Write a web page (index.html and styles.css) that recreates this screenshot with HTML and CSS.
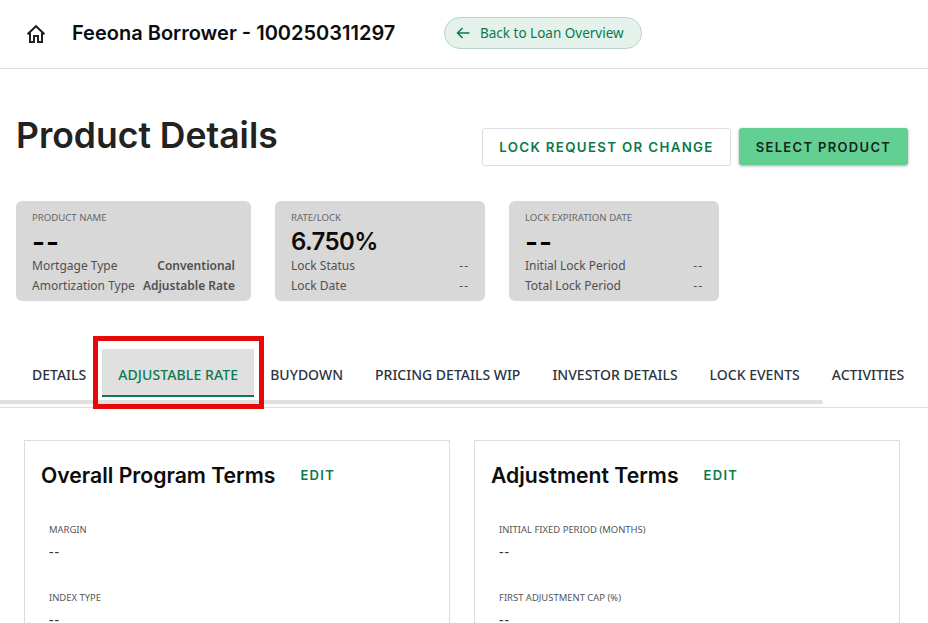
FILE: index.html
```html
<!DOCTYPE html>
<html lang="en">
<head>
<meta charset="utf-8">
<title>Product Details</title>
<link rel="stylesheet" href="styles.css">
</head>
<body>
<header class="topbar">
  <svg class="home" viewBox="0 0 24 24" width="24" height="24" aria-hidden="true"><path d="M3.500 12.200 12 4.200l8.500 8M6 10.200V20h4v-6h4v6h4v-9.800" fill="none" stroke="#222" stroke-width="2"/></svg>
  <span class="borrower">Feeona Borrower - 100250311297</span>
  <a class="back">
    <svg viewBox="0 0 16 16" width="16" height="16" aria-hidden="true"><path d="M14.500 8H2.500M7.500 3 2.500 8l5 5" fill="none" stroke="#0b7a4f" stroke-width="1.500"/></svg>
    <span>Back to Loan Overview</span>
  </a>
</header>
<main>
  <section class="headline">
    <h1>Product Details</h1>
    <div class="actions">
      <button class="btn outline">LOCK REQUEST OR CHANGE</button>
      <button class="btn solid">SELECT PRODUCT</button>
    </div>
  </section>
  <section class="summary">
    <div class="stat w235">
      <div class="cap">PRODUCT NAME</div>
      <div class="big dash">--</div>
      <div class="row"><span>Mortgage Type</span><b>Conventional</b></div>
      <div class="row"><span>Amortization Type</span><b>Adjustable Rate</b></div>
    </div>
    <div class="stat w210">
      <div class="cap">RATE/LOCK</div>
      <div class="big">6.750%</div>
      <div class="row"><span>Lock Status</span><span class="nil">--</span></div>
      <div class="row"><span>Lock Date</span><span class="nil">--</span></div>
    </div>
    <div class="stat w210">
      <div class="cap">LOCK EXPIRATION DATE</div>
      <div class="big dash">--</div>
      <div class="row"><span>Initial Lock Period</span><span class="nil">--</span></div>
      <div class="row"><span>Total Lock Period</span><span class="nil">--</span></div>
    </div>
  </section>
  <nav class="tabs">
    <div class="tablist">
      <a class="tab">DETAILS</a>
      <a class="tab active">ADJUSTABLE RATE</a>
      <a class="tab">BUYDOWN</a>
      <a class="tab">PRICING DETAILS WIP</a>
      <a class="tab">INVESTOR DETAILS</a>
      <a class="tab">LOCK EVENTS</a>
      <a class="tab">ACTIVITIES</a>
    </div>
    <div class="scrollbar"></div>
    <div class="highlight"></div>
  </nav>
  <section class="panels">
    <article class="panel">
      <div class="panel-head"><h2>Overall Program Terms</h2><a class="edit">EDIT</a></div>
      <div class="field"><div class="label">MARGIN</div><div class="value">--</div></div>
      <div class="field"><div class="label">INDEX TYPE</div><div class="value">--</div></div>
    </article>
    <article class="panel">
      <div class="panel-head"><h2>Adjustment Terms</h2><a class="edit">EDIT</a></div>
      <div class="field"><div class="label">INITIAL FIXED PERIOD (MONTHS)</div><div class="value">--</div></div>
      <div class="field"><div class="label">FIRST ADJUSTMENT CAP (%)</div><div class="value">--</div></div>
    </article>
  </section>
</main>
</body>
</html>
```
FILE: styles.css
```css
* { box-sizing: border-box; }
html, body { margin: 0; height: 623px; overflow: hidden; background: #fff; }
body { font-family: "Noto Sans", "Open Sans", sans-serif; color: #222; }

.topbar { height: 69px; border-bottom: 1px solid #ddd; display: flex; align-items: center; padding-left: 24px; }
.home { flex: none; margin-right: 24px; margin-bottom: 1px; }
.borrower { font-family: Inter, sans-serif; font-weight: 600; font-size: 20px; color: #0c0c0c; width: 372px; white-space: nowrap; margin-bottom: 2px; }
.back { display: flex; align-items: center; gap: 9px; width: 198px; height: 32px; padding-left: 10px; border: 1px solid #b4d6c6; border-radius: 16px; background: #e4f2eb; color: #0b7a4f; font-size: 13.500px; white-space: nowrap; margin-bottom: 3px; }

.headline { display: flex; justify-content: space-between; padding: 0 20px 0 16px; height: 132px; }
h1 { margin: 43px 0 0; font-family: Inter, sans-serif; font-weight: 600; font-size: 35.500px; line-height: 48px; color: #222; white-space: nowrap; }
.actions { display: flex; gap: 8px; align-items: flex-start; margin-top: 59px; }
.btn { font-family: Inter, sans-serif; font-weight: 600; font-size: 13.300px; letter-spacing: 1.330px; border-radius: 3px; white-space: nowrap; padding: 0; }
.outline { width: 249px; height: 38px; background: #fff; border: 1px solid #ddd; color: #0b7a4f; }
.solid { width: 169px; height: 37px; background: #62d092; border: 0; color: #16261d; font-size: 13px; box-shadow: 0 1px 3px rgba(0,0,0,.35); }

.summary { display: flex; gap: 24px; padding-left: 16px; }
.stat { height: 100px; background: #d8d8d8; border-radius: 6px; padding: 10px 16px 0; }
.w235 { width: 235px; }
.w210 { width: 210px; }
.cap { font-size: 9.600px; line-height: 13px; color: #666; }
.big { font-family: Inter, sans-serif; font-weight: 600; font-size: 24px; line-height: 36px; color: #0c0c0c; letter-spacing: -.6px; margin-bottom: -4px; }
.dash { font-size: 28px; letter-spacing: 1px; color: #000; }
.row { display: flex; justify-content: space-between; font-size: 12px; line-height: 20px; color: #505050; white-space: nowrap; }
.row b { font-weight: 600; }
.nil { letter-spacing: 1px; }

.tabs { position: relative; height: 107px; margin-top: 0; border-bottom: 1px solid #ddd; padding-top: 48px; }
.tablist { display: flex; padding-left: 16px; height: 48px; white-space: nowrap; overflow: hidden; }
.tab { flex: none; padding: 0 16px; font-size: 14px; font-weight: 500; line-height: 51px; color: #2c3440; }
.tab.active { background: #e0e0e0; color: #0b7a4f; border-bottom: 2px solid #0b7a4f; letter-spacing: .11px; }
.scrollbar { margin-top: 3px; width: 823px; height: 4px; background: #e0e0e0; border-radius: 0 2px 2px 0; }
.highlight { position: absolute; left: 93px; top: 35px; width: 171px; height: 73px; border: 5px solid #e80808; }

.panels { display: flex; gap: 24px; padding: 32px 0 0 24px; }
.panel { width: 426px; height: 240px; border: 1px solid #ddd; padding: 16px 16px 0; }
.panel-head { display: flex; align-items: center; gap: 25px; height: 36px; margin-bottom: 29px; }
h2 { margin: 0; font-family: Inter, sans-serif; font-weight: 600; font-size: 21.200px; color: #0c0c0c; white-space: nowrap; }
.edit { font-family: Inter, sans-serif; font-weight: 600; font-size: 13px; letter-spacing: 1.300px; color: #0b7a4f; }
.field { padding-left: 8px; height: 68px; }
.label { font-size: 9.450px; line-height: 16px; color: #555; }
.value { font-size: 14px; line-height: 20px; margin-top: 4px; color: #333; letter-spacing: 1px; }
```
